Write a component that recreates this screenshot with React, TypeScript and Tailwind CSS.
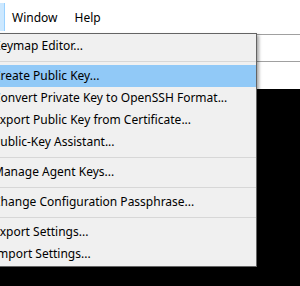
const font = { fontFamily: '"Noto Sans", "Open Sans", sans-serif' }

type Entry = { label: string; active?: boolean } | 'sep'

const entries: Entry[] = [
	{ label: 'Keymap Editor...' },
	'sep',
	{ label: 'Create Public Key...', active: true },
	{ label: 'Convert Private Key to OpenSSH Format...' },
	{ label: 'Export Public Key from Certificate...' },
	{ label: 'Public-Key Assistant...' },
	'sep',
	{ label: 'Manage Agent Keys...' },
	'sep',
	{ label: 'Change Configuration Passphrase...' },
	'sep',
	{ label: 'Export Settings...' },
	{ label: 'Import Settings...' },
]

export default function App() {
	return (
		<div
			className="relative w-[300px] h-[286px] overflow-hidden bg-black text-[12px] text-black"
			style={font}
		>
			<div className="flex flex-col bg-white">
				<div className="h-[35px] flex items-center border-b border-[#a0a0a0]">
					<div className="w-[5px] h-[28px] mt-[-1px] bg-[#cce8ff] border-r border-[#99d1ff]" />
					<span className="ml-[7px] pt-[2px]">Window</span>
					<span className="ml-[17px] pt-[2px]">Help</span>
				</div>
				<div className="h-[27px] border-b border-[#a0a0a0]" />
				<div className="h-[27px]" />
			</div>

			<div className="absolute left-[-30px] top-[33px] w-[287px] h-[234px] bg-[#f0f0f0] border border-[#646464] shadow-[2px_2px_3px_rgba(0,0,0,0.35)] pt-[1px]">
				{entries.map((e, i) =>
					e === 'sep' ? (
						<div key={i} className="h-[8px] flex items-center">
							<div className="w-full h-px bg-[#d7d7d7]" />
						</div>
					) : (
						<div
							key={i}
							className={`h-[22px] flex items-center pl-[22px] ${e.active ? 'bg-[#91c9f7]' : ''}`}
						>
							{e.label}
						</div>
					),
				)}
			</div>
		</div>
	)
}
